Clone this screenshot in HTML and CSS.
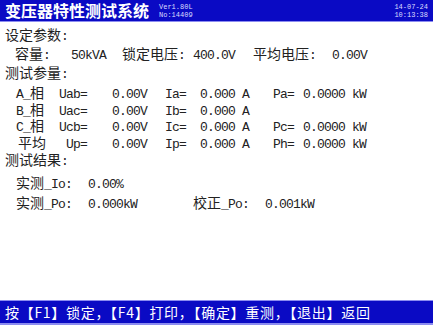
FILE: index.html
```html
<!DOCTYPE html>
<html lang="zh-CN">
<head>
  <meta charset="UTF-8" />
  <title>变压器特性测试系统</title>
  <link rel="stylesheet" href="styles.css">
</head>
<body>

  <!-- title bar -->
  <header class="topbar">
    <span class="title">变压器特性测试系统</span>
    <span class="tiny">Ver1.80L<br>No:14409</span>
    <span class="tiny clock">14-07-24<br>10:13:38</span>
  </header>

  <main class="panel">
    <div class="head">设定参数<span class="n">:</span></div>
    <div class="setrow">
      <span class="lbl"><span>容量</span><span class="n">:</span></span>
      <span class="n">50kVA</span>
      <span class="lbl"><span>锁定电压</span><span class="n">:</span></span>
      <span class="n">400.0V</span>
      <span class="lbl"><span>平均电压</span><span class="n">:</span></span>
      <span class="n">0.00V</span>
    </div>

    <div class="head">测试参量<span class="n">:</span></div>
    <div class="meas">
      <span class="lbl"><span class="n">A_</span><span>相</span></span>
      <span class="n ulab">Uab=</span>
      <span class="n">0.00V</span>
      <span class="n">Ia=</span>
      <span class="n">0.000 A</span>
      <span class="n">Pa=</span>
      <span class="n">0.0000 kW</span>

      <span class="lbl"><span class="n">B_</span><span>相</span></span>
      <span class="n ulab">Uac=</span>
      <span class="n">0.00V</span>
      <span class="n">Ib=</span>
      <span class="n">0.000 A</span>
      <span></span>
      <span></span>

      <span class="lbl"><span class="n">C_</span><span>相</span></span>
      <span class="n ulab">Ucb=</span>
      <span class="n">0.00V</span>
      <span class="n">Ic=</span>
      <span class="n">0.000 A</span>
      <span class="n">Pc=</span>
      <span class="n">0.0000 kW</span>

      <span class="avg">平均</span>
      <span class="n ulab">Up=</span>
      <span class="n">0.00V</span>
      <span class="n">Ip=</span>
      <span class="n">0.000 A</span>
      <span class="n">Ph=</span>
      <span class="n">0.0000 kW</span>
    </div>

    <div class="head">测试结果<span class="n">:</span></div>
    <div class="results">
      <span class="lbl"><span>实测</span><span class="n">_Io:</span></span>
      <span class="n">0.00%</span>
      <span></span>
      <span></span>

      <span class="lbl"><span>实测</span><span class="n">_Po:</span></span>
      <span class="n">0.000kW</span>
      <span class="lbl"><span>校正</span><span class="n">_Po:</span></span>
      <span class="n">0.001kW</span>
    </div>
  </main>

  <!-- key hints -->
  <footer class="keybar">按【F1】锁定，【F4】打印，【确定】重测，【退出】返回</footer>

</body>
</html>
```

FILE: styles.css
```css
body {
  margin: 0;
  width: 433px;
  height: 325px;
  display: flex;
  flex-direction: column;
  background: #fff;
  color: #222;
  font-family: "Noto Sans CJK SC", sans-serif;
  font-size: 14px;
  overflow: hidden;
}
.n {
  font-family: "Liberation Mono", monospace;
  font-size: 13px;
  letter-spacing: -0.8px;
}
.topbar {
  height: 21px;
  border-bottom: 1px solid #8c8cf0;
  background: #0a0ac4;
  color: #fff;
  display: flex;
  align-items: center;
  gap: 10px;
  padding: 0 5px;
}
.title {
  font-size: 16px;
  font-weight: bold;
  line-height: 21px;
  white-space: nowrap;
}
.tiny {
  font-family: "Liberation Mono", monospace;
  font-size: 7px;
  line-height: 8px;
  color: #dcdcff;
}
.clock {
  margin-left: auto;
}
.panel {
  flex: 1;
  padding-top: 3px;
}
.head {
  height: 19px;
  line-height: 19px;
  padding-left: 5px;
}
.lbl {
  display: flex;
  align-items: baseline;
}
.setrow {
  height: 19px;
  line-height: 19px;
  padding-left: 15px;
  display: grid;
  grid-template-columns: 56px 51px 71px 60px 79px auto;
  align-items: baseline;
}
.meas {
  margin-top: 2px;
  padding-left: 16px;
  display: grid;
  grid-template-columns: 42px 54px 53px 35px 73px 30px auto;
  grid-auto-rows: 16.5px;
  line-height: 16.5px;
  align-items: baseline;
  white-space: nowrap;
}
.ulab {
  width: 29px;
  text-align: right;
}
.avg {
  padding-left: 2px;
}
.results {
  margin-top: 3px;
  padding-left: 16px;
  display: grid;
  grid-template-columns: 72px 105px 72px auto;
  grid-auto-rows: 20px;
  line-height: 20px;
  align-items: baseline;
}
.keybar {
  height: 22px;
  line-height: 22px;
  border-top: 1px solid #8c8cf0;
  border-bottom: 2px solid #8c8cf0;
  background: #0a0ac4;
  color: #fff;
  padding-left: 5px;
  letter-spacing: 0.7px;
  white-space: nowrap;
}
```
